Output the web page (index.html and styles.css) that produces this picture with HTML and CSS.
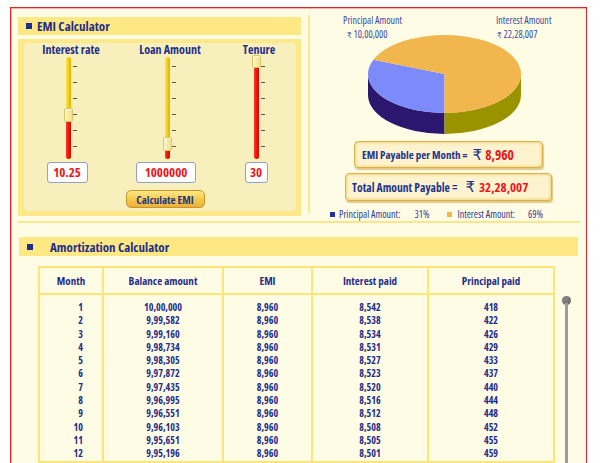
FILE: index.html
```html
<!DOCTYPE html>
<html lang="en">
<head>
<meta charset="utf-8">
<title>EMI Calculator</title>
<link rel="stylesheet" href="styles.css">
</head>
<body>
<div class="frame">
  <div class="top">
    <div class="left">
      <div class="bar"><span class="bullet"></span><span class="bar-title">EMI Calculator</span></div>
      <div class="panel">
        <div class="panel-inner">
          <div class="sliders">
            <div class="col">
              <div class="col-label">Interest rate</div>
              <div class="slider">
                <div class="track"><div class="fill" style="height:44px"></div><div class="thumb" style="top:51px"></div></div>
                <div class="ticks"><i></i><i></i><i></i><i></i><i></i><i></i></div>
              </div>
              <div class="val w1">10.25</div>
            </div>
            <div class="col">
              <div class="col-label">Loan Amount</div>
              <div class="slider">
                <div class="track"><div class="fill" style="height:15px"></div><div class="thumb" style="top:80px"></div></div>
                <div class="ticks"><i></i><i></i><i></i><i></i><i></i><i></i></div>
              </div>
              <div class="val w2">1000000</div>
            </div>
            <div class="col">
              <div class="col-label">Tenure</div>
              <div class="slider">
                <div class="track"><div class="fill" style="height:97px"></div><div class="thumb short" style="top:-2px"></div></div>
                <div class="ticks"><i></i><i></i><i></i><i></i><i></i><i></i></div>
              </div>
              <div class="val w3">30</div>
            </div>
          </div>
          <div class="btn-row"><button class="calc">Calculate EMI</button></div>
        </div>
      </div>
    </div>
    <div class="vsep"></div>
    <div class="right">
      <div class="chart">
        <div class="lbl lbl-p"><div>Principal Amount</div><div class="amt"><span class="rs">₹</span> 10,00,000</div></div>
        <div class="lbl lbl-i"><div>Interest Amount</div><div class="amt"><span class="rs">₹</span> 22,28,007</div></div>
        <svg class="pie" width="161" height="103" viewBox="0 0 161 103">
          <path d="M80.5,80 A76.5,39 0 0,1 4,41 L4,62 A76.5,39 0 0,0 80.5,101 Z" fill="#2b176e"/>
          <path d="M157,41 A76.5,39 0 0,1 80.5,80 L80.5,101 A76.5,39 0 0,0 157,62 Z" fill="#9a9300"/>
          <path d="M80.5,41 L80.5,80 A76.5,39 0 0,1 9.37,26.64 Z" fill="#7c8afa"/>
          <path d="M80.5,41 L9.37,26.64 A76.5,39 0 1,1 80.5,80 Z" fill="#f1b64e"/>
        </svg>
      </div>
      <div class="totals">
        <div class="box box1"><span class="bl">EMI Payable per Month =</span><span class="rupee r1">₹</span><span class="bv v1">8,960</span></div>
        <div class="box box2"><span class="bl bl2">Total Amount Payable =</span><span class="rupee r2">₹</span><span class="bv v2">32,28,007</span></div>
      </div>
      <div class="legend">
        <span class="sq sq-p"></span><span class="lg-t1">Principal Amount:</span><span class="lg-p1">31%</span>
        <span class="sq sq-i"></span><span class="lg-t2">Interest Amount:</span><span class="lg-p2">69%</span>
      </div>
    </div>
  </div>
  <div class="hline"></div>
  <div class="bar amort-bar"><span class="bullet"></span><span class="bar-title">Amortization Calculator</span></div>
  <div class="amort">
    <table class="grid">
      <colgroup><col class="c1"><col class="c2"><col class="c3"><col class="c4"><col class="c5"></colgroup>
      <thead>
        <tr><th>Month</th><th>Balance amount</th><th>EMI</th><th>Interest paid</th><th>Principal paid</th></tr>
      </thead>
      <tbody>
        <tr class="first"><td class="m">1</td><td>10,00,000</td><td>8,960</td><td>8,542</td><td>418</td></tr>
        <tr><td class="m">2</td><td>9,99,582</td><td>8,960</td><td>8,538</td><td>422</td></tr>
        <tr><td class="m">3</td><td>9,99,160</td><td>8,960</td><td>8,534</td><td>426</td></tr>
        <tr><td class="m">4</td><td>9,98,734</td><td>8,960</td><td>8,531</td><td>429</td></tr>
        <tr><td class="m">5</td><td>9,98,305</td><td>8,960</td><td>8,527</td><td>433</td></tr>
        <tr><td class="m">6</td><td>9,97,872</td><td>8,960</td><td>8,523</td><td>437</td></tr>
        <tr><td class="m">7</td><td>9,97,435</td><td>8,960</td><td>8,520</td><td>440</td></tr>
        <tr><td class="m">8</td><td>9,96,995</td><td>8,960</td><td>8,516</td><td>444</td></tr>
        <tr><td class="m">9</td><td>9,96,551</td><td>8,960</td><td>8,512</td><td>448</td></tr>
        <tr><td class="m">10</td><td>9,96,103</td><td>8,960</td><td>8,508</td><td>452</td></tr>
        <tr><td class="m">11</td><td>9,95,651</td><td>8,960</td><td>8,505</td><td>455</td></tr>
        <tr><td class="m">12</td><td>9,95,196</td><td>8,960</td><td>8,501</td><td>459</td></tr>
      </tbody>
    </table>
    <div class="scroll"><div class="knob"></div><div class="rail"></div></div>
  </div>
</div>
</body>
</html>
```
FILE: styles.css
```css
html, body { margin: 0; padding: 0; background: #ffffff; overflow: hidden; }
body {
  font-family: "Open Sans", "Liberation Sans", sans-serif;
  font-stretch: 75%;
  color: #1f2e8a;
}
.frame {
  margin: 7px 0 0 10px;
  width: 577px;
  height: 470px;
  box-sizing: border-box;
  border: 1px solid #e6222a;
  box-shadow: inset 1px 1px 0 #f7b3b3;
  background: #fffce6;
  padding: 5px 6px 0 7px;
}
.top { display: flex; height: 203px; }
.left { width: 283px; padding-top: 4px; flex: none; }
.bar {
  height: 18px;
  background: #fde883;
  display: flex;
  align-items: center;
  padding-left: 8px;
}
.bullet { width: 6px; height: 6px; background: #1d2d8f; flex: none; }
.bar-title { font-weight: bold; font-size: 13px; margin-left: 5px; color: #1f2e8a; white-space: nowrap; }
.panel { margin-top: 4px; background: #fde98a; padding: 4px 5px 5px 6px; }
.panel-inner { background: #f7f0bd; border-radius: 4px; height: 168px; }
.sliders { display: grid; grid-template-columns: 94px 104px 74px; }
.col { display: flex; flex-direction: column; align-items: center; }
.col-label { font-weight: bold; font-size: 12px; line-height: 14px; height: 14px; white-space: nowrap; }
.slider { display: flex; gap: 2px; height: 102px; }
.track {
  position: relative;
  width: 5px;
  height: 102px;
  border-radius: 3px;
  background: linear-gradient(to right, #fbe561, #f3cc16 50%, #e0b000);
}
.fill {
  position: absolute; left: 0; right: 0; bottom: 0;
  border-radius: 0 0 3px 3px;
  background: linear-gradient(to right, #ff3a22, #ee1606 50%, #d00c00);
}
.thumb {
  position: absolute; left: -2px; width: 9px; height: 14px; box-sizing: border-box;
  border: 1px solid #dcc565; border-radius: 2px;
  background: linear-gradient(to right, #fbf3bf, #f1e28f);
  box-shadow: inset 2px 2px 0 -1px #fffbe0;
}
.thumb.short { height: 13px; }
.ticks { display: flex; flex-direction: column; gap: 15px; padding-top: 9px; width: 4px; }
.ticks i { display: block; width: 4px; height: 1px; background: #5a5a4a; }
.val {
  margin-top: 3px; height: 21px; box-sizing: border-box;
  border: 1px solid #95a2c6; border-radius: 3px;
  background: #ffffff; box-shadow: inset 0 0 1px #c9d0e4;
  color: #ea1620; font-weight: bold; font-size: 13px; line-height: 19px; text-align: center;
  margin-right: 8px;
}
.w1 { width: 41px; }
.w2 { width: 60px; }
.w3 { width: 23px; margin-right: 6px; }
.btn-row { display: flex; justify-content: center; padding-left: 10px; margin-top: 7px; }
.calc {
  width: 79px; height: 18px; padding: 0;
  border: 1px solid #c8952a; border-radius: 5px;
  background: linear-gradient(#fde88a, #f6c847 55%, #eab03a);
  font-family: inherit; font-stretch: 75%; font-weight: bold; font-size: 11px; color: #24368c;
}
.vsep { width: 2px; height: 198px; margin: 2px 0 0 7px; background: #fde88a; flex: none; }
.right { width: 270px; flex: none; display: flex; flex-direction: column; }
.chart { display: grid; }
.chart > * { grid-area: 1 / 1; }
.lbl { font-size: 10px; line-height: 14px; color: #3a4b9e; align-self: start; justify-self: start; white-space: nowrap; }
.lbl-p { margin-left: 33px; }
.lbl-i { margin-left: 186px; }
.amt { padding-left: 4px; }
.lbl-i .amt { padding-left: 1px; }
.rs { font-size: 8px; font-family: "DejaVu Sans", sans-serif; }
.pie { margin: 20px 0 0 54px; display: block; }
.totals { display: flex; flex-direction: column; align-items: center; padding-left: 7px; gap: 5px; margin-top: 5px; }
.box {
  box-sizing: border-box; display: flex; align-items: center;
  border: 1px solid #d9b24e; border-radius: 4px;
  background: #fdf4cf;
  box-shadow: inset 0 0 3px 1px #f1d47e, 1px 2px 1px rgba(205, 165, 70, 0.6);
  white-space: nowrap;
}
.box1 { width: 189px; height: 27px; padding-left: 7px; }
.box2 { width: 207px; height: 28px; padding-left: 6px; }
.bl { font-weight: bold; font-size: 11px; color: #22338b; }
.bl2 { font-size: 11.6px; }
.rupee { font-family: "DejaVu Sans", "Noto Sans", sans-serif; font-stretch: normal; font-size: 15px; color: #22338b; }
.r1 { margin-left: 5px; }
.r2 { margin-left: 8px; }
.bv { font-weight: bold; color: #ea1620; }
.v1 { font-size: 13.5px; margin-left: 3px; }
.v2 { font-size: 13px; margin-left: 4px; }
.legend { display: flex; align-items: center; margin-left: 20px; margin-top: 7px; font-size: 10px; line-height: 12px; color: #2c3c90; white-space: nowrap; }
.sq { width: 5px; height: 5px; flex: none; }
.sq-p { background: #23309a; }
.sq-i { background: #f1b64e; margin-left: 18px; }
.lg-t1 { margin-left: 4px; }
.lg-p1 { margin-left: 14px; }
.lg-t2 { margin-left: 5px; }
.lg-p2 { margin-left: 13px; }
.hline { height: 2px; margin-top: 5px; background: #fbe68c; }
.amort-bar { margin: 14px 2px 0 1px; height: 19px; padding-left: 8px; }
.amort-bar .bar-title { margin-left: 17px; }
.amort { display: flex; align-items: flex-start; gap: 7px; margin-top: 10px; padding-left: 20px; }
.grid {
  width: 515px; table-layout: fixed; border-collapse: collapse;
  border: 2px solid #fde676; color: #1f2e8a; flex: none;
}
.c1 { width: 64px; } .c2 { width: 120px; } .c3 { width: 89px; } .c4 { width: 116px; } .c5 { width: 126px; }
.grid th {
  height: 25px; padding: 0; font-size: 11px; font-weight: bold;
  border: 2px solid #fde676; text-align: center;
}
.grid td {
  padding: 0; font-size: 10px; font-weight: bold; line-height: 13.3px; text-align: center;
  border-left: 2px solid #fde676; border-right: 2px solid #fde676;
}
.grid td.m { text-align: right; padding-right: 19px; }
.grid tr.first td { padding-top: 6px; }
.scroll { width: 9px; display: flex; flex-direction: column; align-items: center; padding-top: 30px; }
.knob { width: 9px; height: 9px; border-radius: 50%; background: radial-gradient(circle at 40% 35%, #8a8a8a, #5e5e5e); }
.rail { width: 3px; height: 200px; margin-top: -2px; background: #9c9c9c; }
```
